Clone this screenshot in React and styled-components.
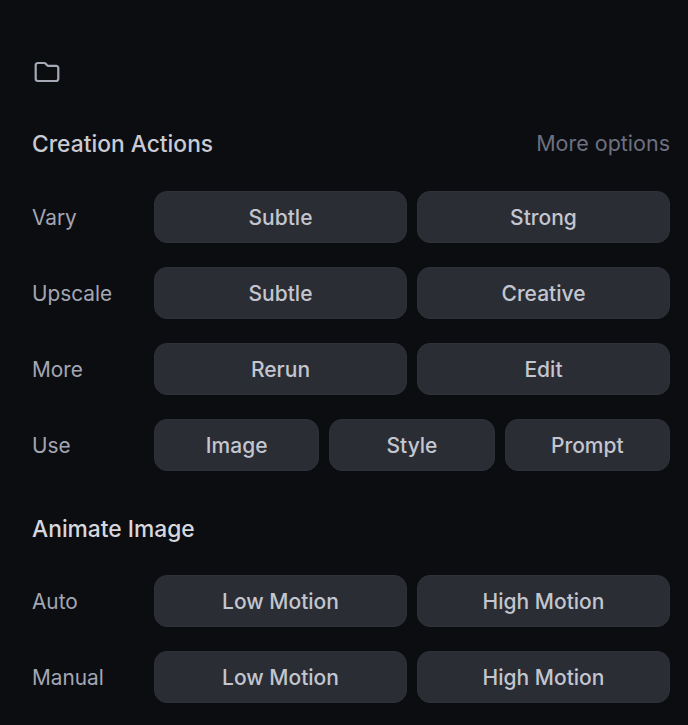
import React from "react";
import styled, { createGlobalStyle } from "styled-components";

const GlobalStyle = createGlobalStyle`
  html, body {
    margin: 0;
    padding: 0;
    background: #0c0d11;
  }
  body {
    font-family: "Inter", "Noto Sans", "Liberation Sans", sans-serif;
  }
`;

const Panel = styled.div`
  width: 688px;
  height: 725px;
  box-sizing: border-box;
  padding: 61px 18px 0 32px;
  background: #0c0d11;
  overflow: hidden;
`;

const FolderIcon = styled.svg`
  display: block;
  width: 28px;
  height: 22px;
  margin-bottom: 47px;
  fill: none;
  stroke: #a6aab6;
  stroke-width: 2.2;
  stroke-linejoin: round;
`;

const SectionHead = styled.div`
  display: flex;
  justify-content: space-between;
  align-items: center;
  height: 26px;
  margin-bottom: ${(p) => p.$gap}px;
`;

const SectionTitle = styled.h2`
  margin: 0;
  font-size: 22.8px;
  font-weight: 500;
  color: ${(p) => (p.$bright ? "#d6d8de" : "#c8cbd3")};
`;

const MoreLink = styled.a`
  font-size: 21.5px;
  font-weight: 400;
  color: #6c7080;
`;

const Rows = styled.div`
  display: flex;
  flex-direction: column;
  gap: 24px;
  margin-bottom: ${(p) => p.$after || 0}px;
`;

const Row = styled.div`
  display: grid;
  grid-template-columns: 122px 1fr;
  align-items: center;
`;

const RowLabel = styled.span`
  font-size: 20.8px;
  font-weight: 400;
  color: #a3a7b3;
`;

const Buttons = styled.div`
  display: grid;
  grid-template-columns: repeat(${(p) => p.$count}, 1fr);
  gap: 10px;
`;

const ActionButton = styled.button`
  height: 52px;
  padding: 0;
  border: 1px solid #2f3239;
  border-radius: 13px;
  background: #2b2d35;
  font-family: inherit;
  font-size: 21px;
  font-weight: 500;
  color: #c3c6cf;
`;

const creation = [
  { label: "Vary", actions: ["Subtle", "Strong"] },
  { label: "Upscale", actions: ["Subtle", "Creative"] },
  { label: "More", actions: ["Rerun", "Edit"] },
  { label: "Use", actions: ["Image", "Style", "Prompt"] },
];

const animate = [
  { label: "Auto", actions: ["Low Motion", "High Motion"] },
  { label: "Manual", actions: ["Low Motion", "High Motion"] },
];

const ActionRows = ({ rows, after }) => (
  <Rows $after={after}>
    {rows.map((row) => (
      <Row key={row.label}>
        <RowLabel>{row.label}</RowLabel>
        <Buttons $count={row.actions.length}>
          {row.actions.map((action) => (
            <ActionButton key={action}>{action}</ActionButton>
          ))}
        </Buttons>
      </Row>
    ))}
  </Rows>
);

export default function App() {
  return (
    <Panel>
      <GlobalStyle />
      <FolderIcon viewBox="0 0 28 22">
        <path d="M3.7 4.2A2.2 2.2 0 0 1 5.9 2h6.2c.7 0 1.3.3 1.7.8l1 1.2c.4.5 1 .8 1.7.8h7.6a2.2 2.2 0 0 1 2.2 2.2v10.8a2.2 2.2 0 0 1-2.2 2.2H5.9a2.2 2.2 0 0 1-2.2-2.2z" />
      </FolderIcon>
      <SectionHead $gap={35}>
        <SectionTitle>Creation Actions</SectionTitle>
        <MoreLink>More options</MoreLink>
      </SectionHead>
      <ActionRows rows={creation} after={44} />
      <SectionHead $gap={34}>
        <SectionTitle $bright>Animate Image</SectionTitle>
      </SectionHead>
      <ActionRows rows={animate} />
    </Panel>
  );
}
